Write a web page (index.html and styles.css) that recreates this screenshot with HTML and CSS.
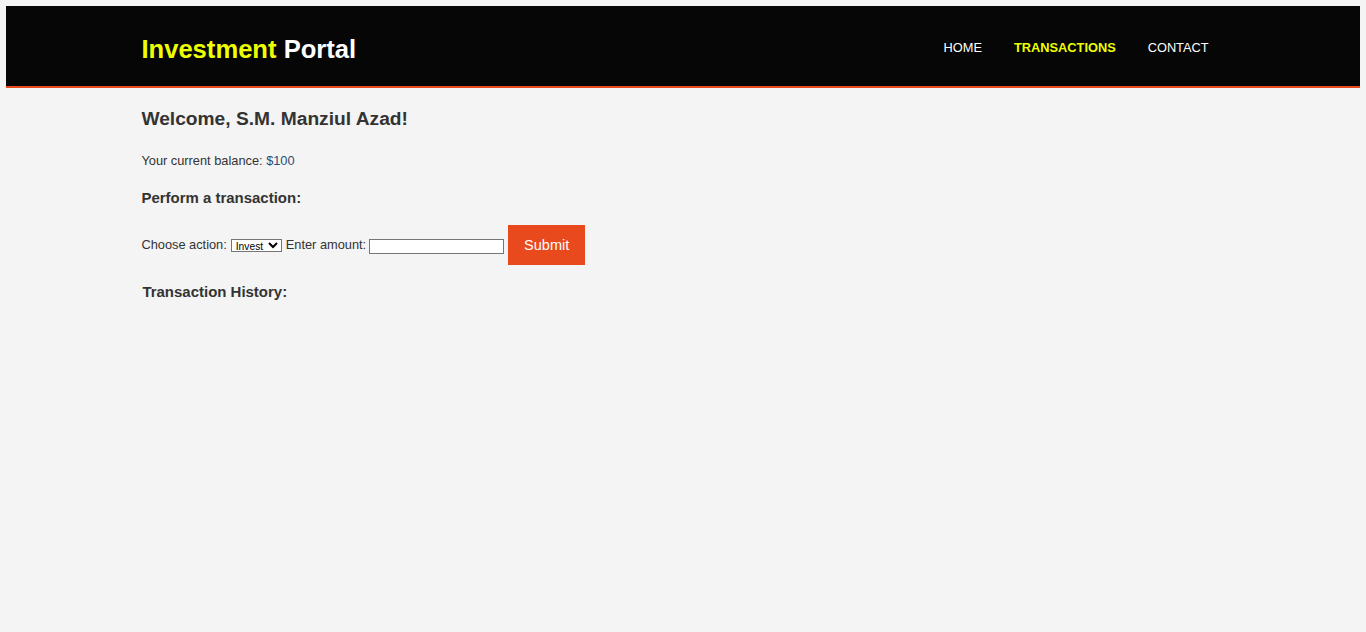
FILE: index.html
```html
<!DOCTYPE html>
<html lang="en">
<head>
<meta charset="utf-8">
<title>Investment Portal | Transactions</title>
<link rel="stylesheet" href="styles.css">
</head>
<body>
<header class="site-header">
  <div class="container header-inner">
    <h1 class="branding"><span class="highlight">Investment</span> Portal</h1>
    <nav class="nav">
      <ul class="nav-list">
        <li class="nav-item"><a href="#">Home</a></li>
        <li class="nav-item current"><a href="#">Transactions</a></li>
        <li class="nav-item"><a href="#">Contact</a></li>
      </ul>
    </nav>
  </div>
</header>
<main class="container main">
  <h2 class="welcome">Welcome, S.M. Manziul Azad!</h2>
  <p class="balance">Your current balance: <span class="amount">$100</span></p>
  <h3 class="section-title">Perform a transaction:</h3>
  <form class="tx-form">
    <label class="tx-label">Choose action:</label>
    <select class="tx-select"><option>Invest</option><option>Withdraw</option></select>
    <label class="tx-label">Enter amount:</label>
    <input class="tx-input" type="text">
    <button class="tx-button" type="button">Submit</button>
  </form>
  <h3 class="section-title history">Transaction History:</h3>
</main>
</body>
</html>
```
FILE: styles.css
```css
html, body {
  background: #f4f4f4;
}
body {
  margin: 6px;
  font-family: "Liberation Sans", Arial, sans-serif;
  font-size: 12.8px;
  line-height: 1.5;
  color: #333333;
}
.container {
  width: 80%;
  margin: 0 auto;
}
.site-header {
  background: #060606;
  height: 80px;
  border-bottom: 2px solid #e8491d;
}
.header-inner {
  height: 100%;
  display: flex;
  justify-content: space-between;
  align-items: flex-start;
}
.branding {
  margin: 0;
  padding-top: 25px;
  font-size: 25.6px;
  line-height: 36px;
  font-weight: bold;
  color: #ffffff;
}
.highlight {
  color: #eeff00;
}
.nav-list {
  list-style: none;
  margin: 0;
  padding: 0;
  padding-top: 32px;
  display: flex;
}
.nav-item {
  padding: 0 16px;
  line-height: 20px;
}
.nav-item a {
  color: #ffffff;
  text-decoration: none;
  text-transform: uppercase;
}
.nav-item.current a {
  color: #eeff00;
  font-weight: bold;
}
.main {
  padding-top: 17px;
}
.welcome {
  margin: 0;
  font-size: 19.2px;
  line-height: 28px;
}
.balance {
  margin: 18px 0 0;
  line-height: 20px;
}
.amount {
  color: #2a4d74;
}
.section-title {
  margin: 17px 0 0;
  font-size: 14.98px;
  line-height: 20px;
}
.tx-form {
  margin-top: 17px;
  display: flex;
  align-items: center;
  gap: 4px;
}
.tx-label {
  line-height: 20px;
}
.tx-select {
  font-family: "Liberation Sans", Arial, sans-serif;
  font-size: 10.24px;
  width: 51px;
  height: 13px;
  padding: 0;
  border: 1px solid #767676;
  border-radius: 0;
  background: #ffffff;
  color: #000000;
  margin-top: 1px;
}
.tx-input {
  width: 135px;
  height: 15px;
  box-sizing: border-box;
  border: 1px solid #767676;
  padding: 0 2px;
  margin-top: 2px;
  margin-left: -1px;
  background: #ffffff;
}
.tx-button {
  width: 77px;
  height: 40px;
  border: none;
  background: #e8491d;
  color: #ffffff;
  font-family: "Liberation Sans", Arial, sans-serif;
  font-size: 14.5px;
  padding: 0;
}
.history {
  margin-top: 17px;
  padding-left: 1px;
}
```
